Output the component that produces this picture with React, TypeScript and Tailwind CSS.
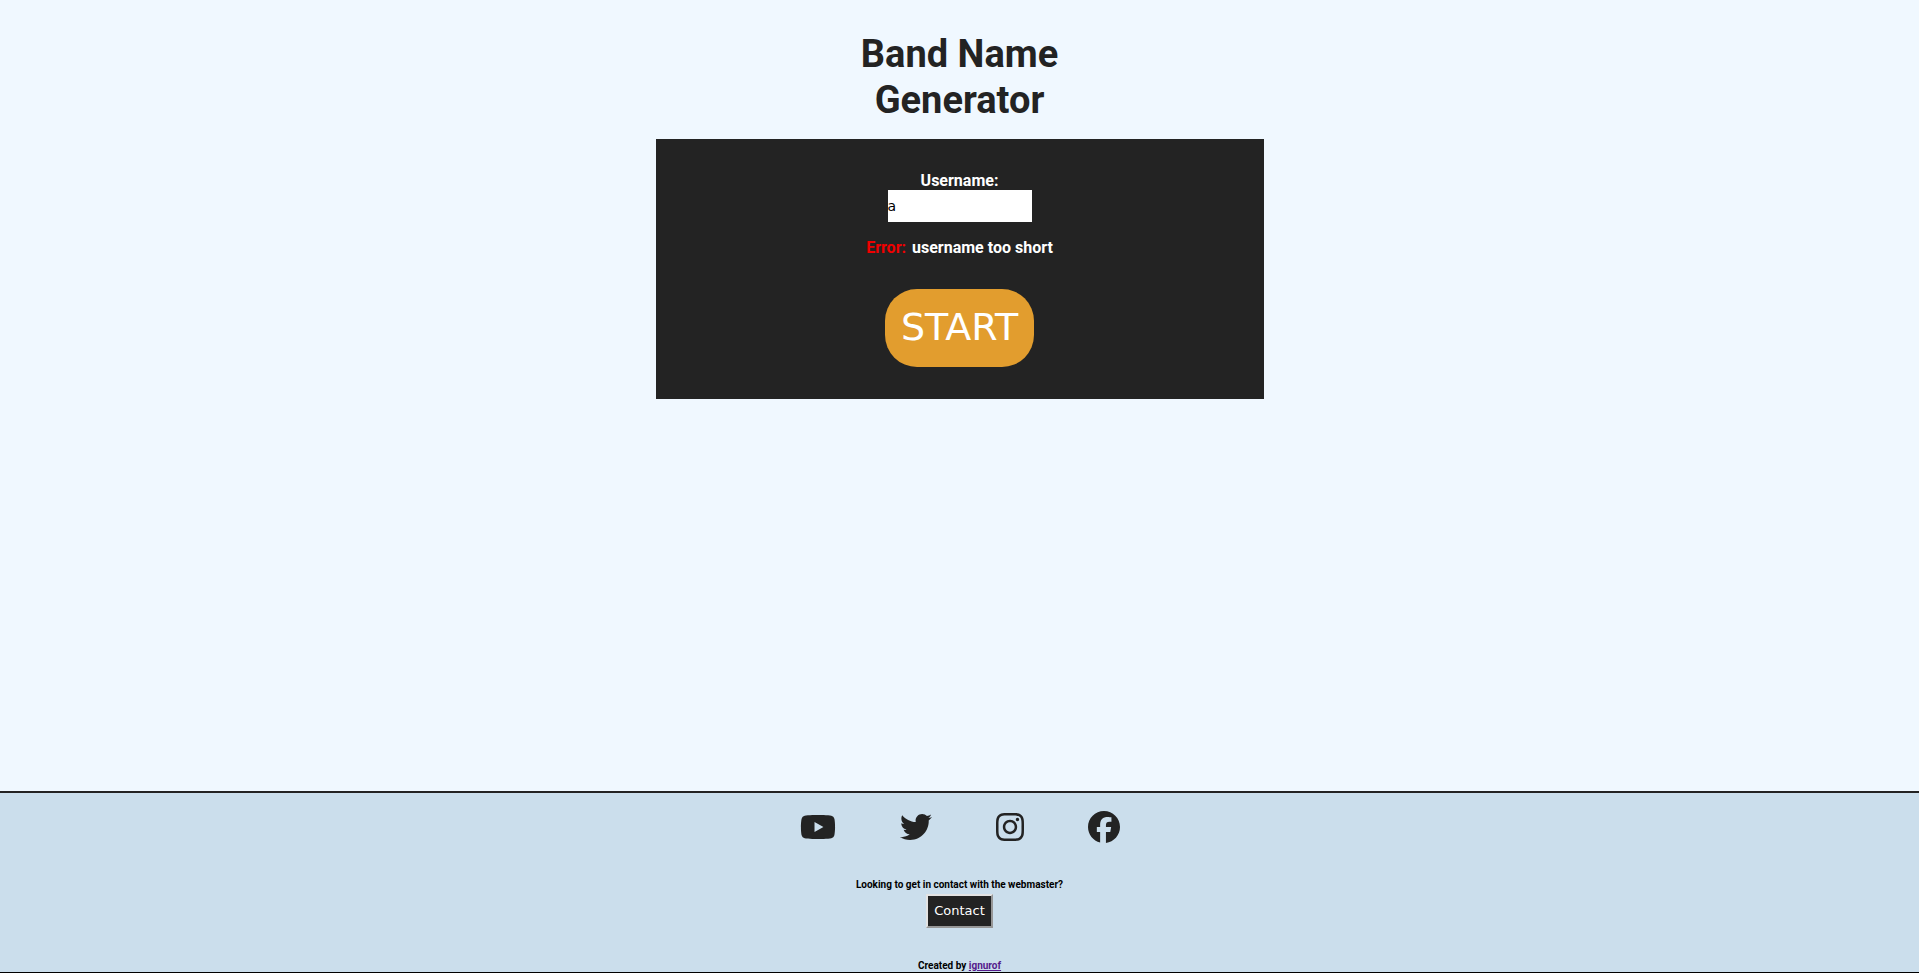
import { useState } from "react";
import { FaYoutube, FaTwitter, FaInstagram, FaFacebook } from "react-icons/fa6";

const socials = [
  { label: "YouTube", Icon: FaYoutube, width: "w-9" },
  { label: "Twitter", Icon: FaTwitter, width: "w-8" },
  { label: "Instagram", Icon: FaInstagram, width: "w-7" },
  { label: "Facebook", Icon: FaFacebook, width: "w-8" },
];

export default function App() {
  const [username, setUsername] = useState("a");

  return (
    <div className="flex min-h-screen flex-col border-b border-black bg-[#f0f8ff] font-['Roboto',sans-serif] text-[#232323]">
      <main className="flex flex-1 flex-col items-center pt-[31px]">
        <h1 className="w-64 text-center text-[38px] leading-[46px] font-bold">Band Name Generator</h1>
        <form
          className="mt-4 flex w-full max-w-[608px] flex-col items-center bg-[#232323] py-8 text-base leading-[19px] font-bold text-white"
          onSubmit={(e) => e.preventDefault()}
        >
          <label htmlFor="username">Username:</label>
          <input
            id="username"
            type="text"
            value={username}
            onChange={(e) => setUsername(e.target.value)}
            className="h-8 w-36 bg-white font-['DejaVu_Sans',sans-serif] text-[14px] font-normal text-black outline-none"
          />
          <p className="mt-4 flex gap-[6px]">
            <span className="text-[#f00000]">Error:</span>
            <span>username too short</span>
          </p>
          <button
            type="submit"
            className="mt-8 rounded-[32px] bg-[#e29d2e] px-4 pt-4 pb-[18px] font-['DejaVu_Sans',sans-serif] text-[38px] leading-[44px] font-normal"
          >
            START
          </button>
        </form>
      </main>
      <footer className="flex flex-col items-center border-t-2 border-[#232323] bg-[#cbdeec] pt-[18px] text-[10px] leading-[12px] font-bold text-black">
        <nav className="flex gap-16 text-[#232323]">
          {socials.map(({ label, Icon, width }) => (
            <a key={label} href="#" aria-label={label}>
              <Icon className={`h-8 ${width}`} />
            </a>
          ))}
        </nav>
        <p className="mt-9">Looking to get in contact with the webmaster?</p>
        <button
          type="button"
          className="mt-[3px] border-2 border-t-[#e3e3e3] border-r-[#979797] border-b-[#979797] border-l-[#e3e3e3] bg-[#232323] px-[6px] py-1 font-['DejaVu_Sans',sans-serif] text-[13px] leading-[22px] font-normal text-white"
        >
          Contact
        </button>
        <p className="mt-8">
          Created by{" "}
          <a href="#" className="text-[#551a8b] underline">
            ignurof
          </a>
        </p>
      </footer>
    </div>
  );
}
